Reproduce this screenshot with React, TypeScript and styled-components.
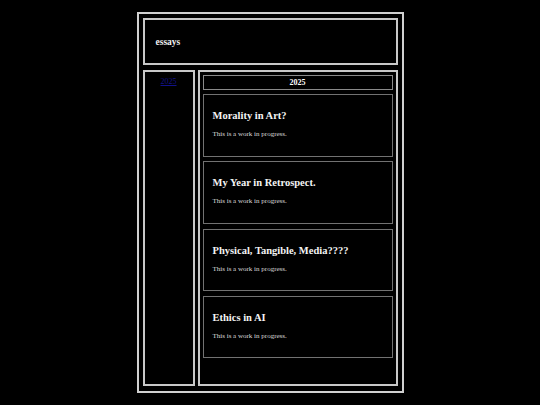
import React from "react";
import styled, { createGlobalStyle } from "styled-components";

const Global = createGlobalStyle`
  html, body { margin: 0; padding: 0; background: #000; }
  body { font-family: "Liberation Serif", "Times New Roman", serif; color: #fff; }
`;

const Frame = styled.div`
  box-sizing: border-box;
  width: 267px;
  height: 381px;
  margin: 12px auto 0;
  border: 2px solid #d0d0d0;
  padding: 4px;
  display: flex;
  flex-direction: column;
  gap: 5px;
`;

const Header = styled.header`
  box-sizing: border-box;
  height: 47px;
  border: 2px solid #c8c8c8;
  display: flex;
  align-items: center;
  padding: 0 10px 0 11px;
  font-weight: bold;
  font-size: 9.5px;
  color: #f0f0f0;
`;

const Body = styled.div`
  display: flex;
  gap: 3px;
  height: 316px;
`;

const Sidebar = styled.nav`
  box-sizing: border-box;
  width: 52px;
  border: 2px solid #c8c8c8;
  display: flex;
  flex-direction: column;
  align-items: center;
  padding-top: 5px;
`;

const YearLink = styled.a`
  font-size: 8px;
  color: #12128a;
  text-decoration: underline;
`;

const Main = styled.main`
  box-sizing: border-box;
  flex: 1;
  border: 2px solid #c8c8c8;
  padding: 3px;
  display: flex;
  flex-direction: column;
`;

const YearHeading = styled.div`
  box-sizing: border-box;
  height: 15px;
  border: 1px solid #8a8a8a;
  display: flex;
  align-items: center;
  justify-content: center;
  font-weight: bold;
  font-size: 8px;
  margin-bottom: 4px;
`;

const CardList = styled.div`
  display: flex;
  flex-direction: column;
  gap: 4.8px;
`;

const Card = styled.article`
  box-sizing: border-box;
  height: 62.5px;
  border: 1px solid #727272;
  padding: 14px 9px 0;
`;

const CardTitle = styled.h2`
  margin: 0;
  font-size: 10.5px;
  font-weight: bold;
  line-height: 13px;
  color: #f4f4f4;
`;

const CardText = styled.p`
  margin: 8px 0 0;
  font-size: 7px;
  line-height: 9px;
  color: #dcdcdc;
`;

const essays = [
  "Morality in Art?",
  "My Year in Retrospect.",
  "Physical, Tangible, Media????",
  "Ethics in AI",
];

export default function App() {
  return (
    <>
      <Global />
      <Frame>
        <Header>essays</Header>
        <Body>
          <Sidebar>
            <YearLink href="#2025">2025</YearLink>
          </Sidebar>
          <Main>
            <YearHeading>2025</YearHeading>
            <CardList>
              {essays.map((t) => (
                <Card key={t}>
                  <CardTitle>{t}</CardTitle>
                  <CardText>This is a work in progress.</CardText>
                </Card>
              ))}
            </CardList>
          </Main>
        </Body>
      </Frame>
    </>
  );
}
